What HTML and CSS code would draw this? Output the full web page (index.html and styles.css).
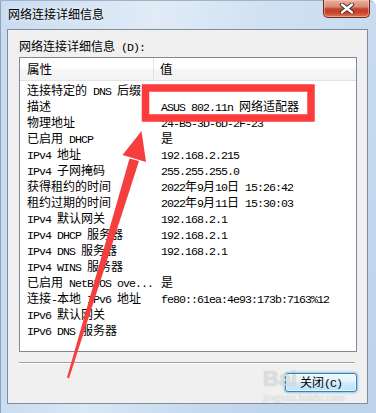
FILE: index.html
```html
<!DOCTYPE html>
<html lang="zh-CN">
<head>
<meta charset="utf-8">
<title>网络连接详细信息</title>
<link rel="stylesheet" href="styles.css">
</head>
<body>
<div class="window">
  <div class="titlebar">
    <span class="title">网络连接详细信息</span>
    <div class="close">
      <svg width="16" height="11" viewBox="0 0 16 11">
        <path d="M3 1.5 L13 9.5 M13 1.5 L3 9.5" stroke="#3b2a2a" stroke-width="4.2" stroke-linecap="round"/>
        <path d="M3 1.5 L13 9.5 M13 1.5 L3 9.5" stroke="#ffffff" stroke-width="2.4" stroke-linecap="round"/>
      </svg>
    </div>
  </div>
  <div class="client">
    <div class="label">网络连接详细信息<span class="m"> (D):</span></div>
    <div class="list">
      <div class="head">
        <div class="hc1">属性</div>
        <div class="hc2">值</div>
      </div>
      <div class="rows">
        <div class="n">连接特定的<span class="m"> DNS </span>后缀</div><div class="v"></div>
        <div class="n">描述</div><div class="v"><span class="m">ASUS 802.11n </span>网络适配器</div>
        <div class="n">物理地址</div><div class="v"><span class="m">24-B5-3D-6D-2F-23</span></div>
        <div class="n">已启用<span class="m"> DHCP</span></div><div class="v">是</div>
        <div class="n"><span class="m">IPv4 </span>地址</div><div class="v"><span class="m">192.168.2.215</span></div>
        <div class="n"><span class="m">IPv4 </span>子网掩码</div><div class="v"><span class="m">255.255.255.0</span></div>
        <div class="n">获得租约的时间</div><div class="v"><span class="m">2022</span>年<span class="m">9</span>月<span class="m">10</span>日<span class="m"> 15:26:42</span></div>
        <div class="n">租约过期的时间</div><div class="v"><span class="m">2022</span>年<span class="m">9</span>月<span class="m">11</span>日<span class="m"> 15:30:03</span></div>
        <div class="n"><span class="m">IPv4 </span>默认网关</div><div class="v"><span class="m">192.168.2.1</span></div>
        <div class="n"><span class="m">IPv4 DHCP </span>服务器</div><div class="v"><span class="m">192.168.2.1</span></div>
        <div class="n"><span class="m">IPv4 DNS </span>服务器</div><div class="v"><span class="m">192.168.2.1</span></div>
        <div class="n"><span class="m">IPv4 WINS </span>服务器</div><div class="v"></div>
        <div class="n">已启用<span class="m"> NetBIOS ove...</span></div><div class="v">是</div>
        <div class="n">连接<span class="m">-</span>本地<span class="m"> IPv6 </span>地址</div><div class="v"><span class="m">fe80::61ea:4e93:173b:7163%12</span></div>
        <div class="n"><span class="m">IPv6 </span>默认网关</div><div class="v"></div>
        <div class="n"><span class="m">IPv6 DNS </span>服务器</div><div class="v"></div>
      </div>
    </div>
    <div class="sep"></div>
    <div class="footer">
      <button class="btn">关闭<span class="m">(C)</span></button>
    </div>
  </div>
  <div class="watermark">
    <span class="wm-big">Bai</span>
    <span class="wm-small">jingyan.baidu.com</span>
  </div>
  <svg class="annot" width="376" height="413" viewBox="0 0 376 413">
    <rect x="145.5" y="88" width="165.5" height="30" fill="none" stroke="#fd3b3b" stroke-width="7.5"/>
    <polygon points="139,161 129.5,158.5 67,377.5 69,378.5" fill="#f53f3f"/>
    <polygon points="141.5,131 146,162 122.5,155" fill="#f53f3f"/>
  </svg>
</div>
</body>
</html>
```
FILE: styles.css
```css
html, body {
  margin: 0;
  padding: 0;
}
body {
  width: 376px;
  height: 413px;
  overflow: hidden;
  font-family: "Noto Sans CJK SC", "Noto Sans", sans-serif;
  font-size: 12px;
  color: #000;
}
.window {
  position: relative;
  width: 376px;
  height: 413px;
  box-sizing: border-box;
  background:
    linear-gradient(100deg, rgba(255,255,255,0) 0%, rgba(255,255,255,0.45) 35%, rgba(255,255,255,0.15) 60%, rgba(255,255,255,0) 85%),
    linear-gradient(#c9dcf0, #bcd3eb);
  border-left: 1px solid #8ba4c0;
  border-top: 1px solid #9db4cc;
  border-radius: 0 7px 0 0;
  display: flex;
  flex-direction: column;
}
.titlebar {
  height: 28px;
  display: flex;
  align-items: flex-start;
  justify-content: space-between;
}
.title {
  margin: 5px 0 0 7px;
  line-height: 16px;
  font-size: 12px;
  color: #000;
  text-shadow: 0 0 6px rgba(255,255,255,0.9);
}
.close {
  width: 47px;
  height: 18px;
  margin: -1px 6px 0 0;
  box-sizing: border-box;
  border: 1px solid #6c2b22;
  border-top: none;
  border-radius: 0 0 5px 5px;
  background: linear-gradient(#eab0a2 0%, #d98a73 40%, #c2462c 52%, #c73e25 70%, #e07654 100%);
  box-shadow: inset 0 0 0 1px rgba(255,210,190,0.5);
  display: flex;
  align-items: center;
  justify-content: center;
}
.client {
  height: 375px;
  margin: 0 8px 0 6px;
  box-sizing: border-box;
  border: 1px solid #7e8e9f;
  background: #f0f0f0;
  display: flex;
  flex-direction: column;
  padding: 8px 10px 0 11px;
}
.label {
  line-height: 16px;
  height: 16px;
  margin-bottom: 3px;
}
.list {
  height: 295px;
  box-sizing: border-box;
  border: 1px solid #828790;
  background: #fff;
  display: flex;
  flex-direction: column;
}
.head {
  display: flex;
  height: 23px;
  box-sizing: border-box;
  border-bottom: 1px solid #e2e3e6;
  background: linear-gradient(#ffffff 0%, #ffffff 45%, #f5f6f7 55%, #f2f3f5 100%);
}
.hc1 {
  width: 134px;
  box-sizing: border-box;
  border-right: 1px solid #e3e4e7;
  padding-left: 7px;
  line-height: 22px;
  font-size: 12.5px;
}
.hc2 {
  padding-left: 6px;
  line-height: 22px;
  font-size: 12.5px;
}
.rows {
  display: grid;
  grid-template-columns: 134px 1fr;
  grid-auto-rows: 16px;
  padding-top: 1px;
}
.n, .v {
  white-space: nowrap;
  overflow: hidden;
  line-height: 16px;
  font-size: 12px;
}
.n {
  padding-left: 7px;
}
.v {
  padding-left: 7px;
}
.m {
  font-family: "Liberation Mono", monospace;
  font-size: 11.6px;
  letter-spacing: -0.96px;
}
.sep {
  height: 1px;
  margin: 10px 2px 0 0;
  background: #a0a0a0;
  border-bottom: 1px solid #ffffff;
}
.footer {
  display: flex;
  justify-content: flex-end;
  padding-top: 9px;
}
.btn {
  width: 72px;
  height: 19px;
  padding: 0;
  box-sizing: border-box;
  border: 1px solid #3c7fb1;
  border-radius: 3px;
  background: linear-gradient(#eef8fd 0%, #e0f2fc 48%, #cdebfb 52%, #bde3f7 100%);
  box-shadow: 0 0 2px 1px rgba(110,190,235,0.8), inset 0 0 0 1px rgba(255,255,255,0.6);
  font-family: "Noto Sans CJK SC", sans-serif;
  font-size: 12px;
  line-height: 16px;
  color: #000;
}
.watermark {
  position: absolute;
  left: 262px;
  top: 366px;
  display: flex;
  flex-direction: column;
  pointer-events: none;
}
.wm-big {
  font-family: "Liberation Sans", sans-serif;
  font-weight: bold;
  font-size: 22px;
  line-height: 24px;
  color: rgba(255,255,255,0.6);
  text-shadow: 0 0 1px rgba(120,120,120,0.6);
}
.wm-small {
  font-family: "Liberation Serif", serif;
  font-size: 11px;
  line-height: 12px;
  color: rgba(255,255,255,0.55);
  text-shadow: 0 0 1px rgba(140,140,140,0.5);
}
.annot {
  position: absolute;
  left: -1px;
  top: -1px;
  pointer-events: none;
}
```
